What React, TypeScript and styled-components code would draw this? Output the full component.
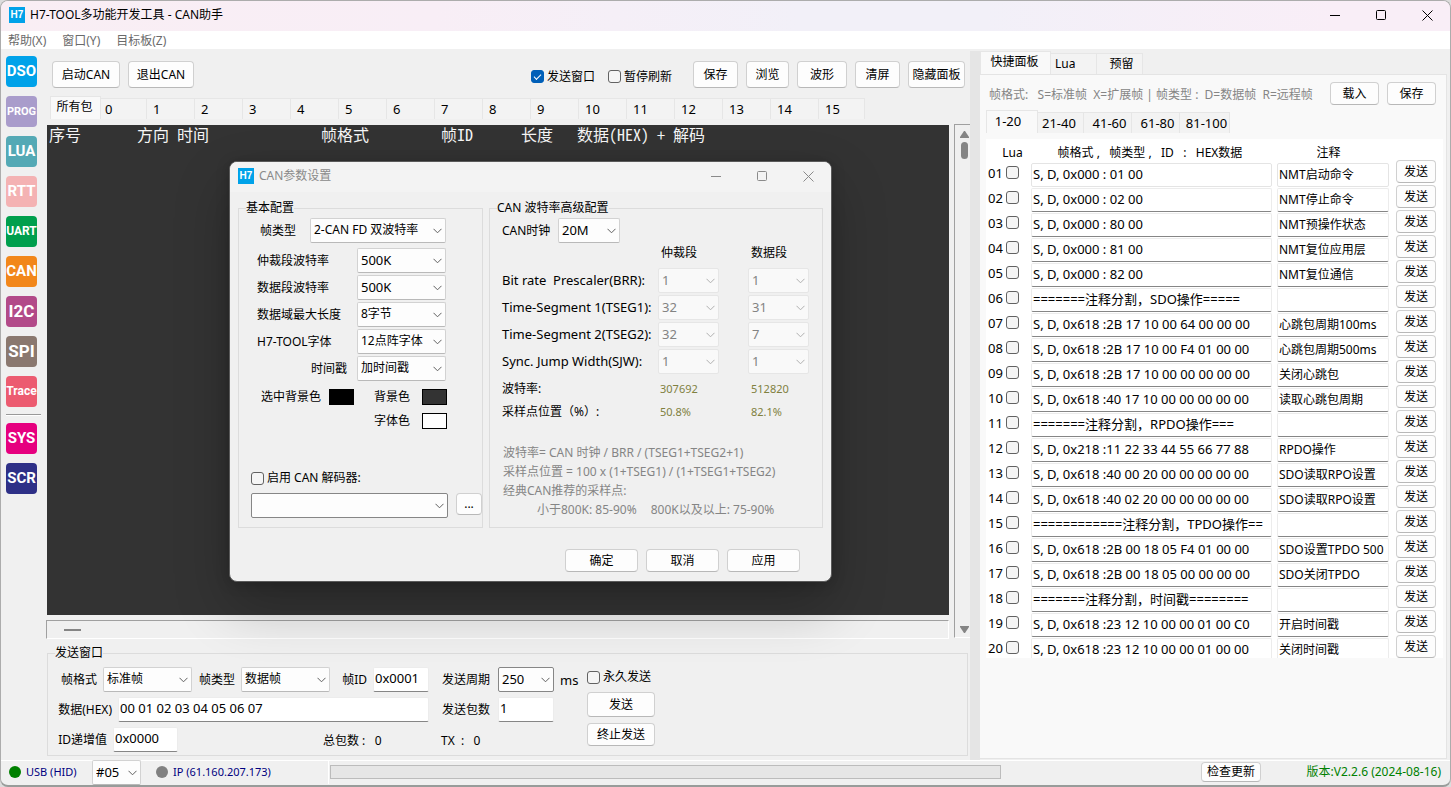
import React from 'react';
import styled, { createGlobalStyle, css } from 'styled-components';

const GlobalStyle = createGlobalStyle`
  *, *::before, *::after { box-sizing: border-box; }
  body {
    margin: 0;
    background: #dcdcdc;
    color: #000;
    font: 12px/16px "Noto Sans", "Noto Sans CJK SC", sans-serif;
  }
  button, input, select { font: inherit; color: inherit; margin: 0; }
  h1, h2, p { margin: 0; font: inherit; }
`;

/* ---------- window chrome ---------- */

const AppWindow = styled.div`
  position: relative;
  display: flex;
  flex-direction: column;
  min-height: 100vh;
  background: #f0f0f0;
  border: 1px solid #acacac;
  border-bottom: 2px solid #989c9a;
  border-radius: 8px;
  overflow: hidden;
`;

const TitleBar = styled.header`
  display: flex;
  align-items: center;
  gap: 5px;
  height: 30px;
  padding: 0 0 2px 8px;
  background: linear-gradient(90deg, #f9eef4 0%, #f8eef6 30%, #f2f0f8 55%, #f2f0f8 68%, #f9eef7 92%);
`;

const DialogTitleBar = styled(TitleBar)`
  background: #f3f3f3;
  color: #8a8a8a;
`;

const Logo = styled.span`
  display: grid;
  place-items: center;
  width: 16px;
  height: 16px;
  background: #00a2e9;
  color: #fff;
  font: bold 10px/16px "Liberation Sans", sans-serif;
`;

const WindowButtons = styled.div`
  display: flex;
  margin-left: auto;
`;

const WindowButton = styled.button`
  display: grid;
  place-items: center;
  width: 46px;
  height: 28px;
  padding: 0;
  border: 0;
  background: none;
  color: inherit;
`;

const MenuBar = styled.nav`
  display: flex;
  gap: 16px;
  height: 18px;
  padding-left: 7px;
  background: #fff;
`;

const MenuItem = styled.a`
  color: #6a6a6a;
  text-decoration: none;
  line-height: 19px;
`;

const Body = styled.div`
  display: flex;
  flex: 1;
`;

/* ---------- shared controls ---------- */

const Button = styled.button<{ $w?: number; $h?: number }>`
  width: ${p => (p.$w ? `${p.$w}px` : 'auto')};
  height: ${p => p.$h ?? 23}px;
  padding: 0;
  border: 1px solid #d0d0d0;
  border-bottom-color: #b8b8b8;
  border-radius: 4px;
  background: #fdfdfd;
  line-height: 16px;
  white-space: nowrap;
`;

const Check = styled.input.attrs({ type: 'checkbox' })`
  appearance: none;
  flex: none;
  display: inline-grid;
  place-items: center;
  width: 13px;
  height: 13px;
  border: 1px solid #626262;
  border-radius: 3px;
  background: #f5f5f5;

  &:checked { background: #005fb8; border-color: #005fb8; }
  &:checked::after {
    content: "";
    width: 7px;
    height: 4px;
    margin-top: -2px;
    border: solid #fff;
    border-width: 0 0 1px 1px;
    transform: rotate(-45deg);
  }
`;

const CheckLabel = styled.label`
  display: flex;
  align-items: center;
  gap: 3px;
  white-space: nowrap;
`;

const TextInput = styled.input<{ $w?: number }>`
  width: ${p => (p.$w ? `${p.$w}px` : '100%')};
  height: 25px;
  padding: 0 1px 3px;
  border: 1px solid #ececec;
  border-bottom-color: #868686;
  border-radius: 2px;
  background: #fff;
  font-size: 13px;
`;

const SelectBox = styled.span<{ $w: number; $strong?: boolean }>`
  position: relative;
  display: block;
  flex: none;
  width: ${p => p.$w}px;
  height: 25px;

  select {
    appearance: none;
    width: 100%;
    height: 100%;
    padding: 0 18px 1px 3px;
    border: 1px solid ${p => (p.$strong ? '#868686' : '#d2d2d2')};
    border-bottom-color: ${p => (p.$strong ? '#868686' : '#b9b9b9')};
    border-radius: 2px;
    background: #fdfdfd;
    opacity: 1;
  }
  select:disabled {
    border-color: #e6e6e6;
    background: #f9f9f9;
    color: #838383;
  }
  svg {
    position: absolute;
    right: 4px;
    top: 10px;
    pointer-events: none;
    color: #606060;
  }
  select:disabled + svg { color: #b0b0b0; }
`;

const ChevronIcon = () => (
  <svg width="9" height="6" viewBox="0 0 9 6" fill="none" stroke="currentColor" aria-hidden="true">
    <path d="M0.5 0.8 L4.5 4.8 L8.5 0.8" />
  </svg>
);

type DropDownProps = {
  value: string;
  width: number;
  id?: string;
  label?: string;
  disabled?: boolean;
  strong?: boolean;
  latin?: boolean;
};

const LatinSelect = styled.select<{ $latin?: boolean }>`
  && { font-size: ${p => (p.$latin ? 13 : 12)}px; }
`;

const DropDown = ({ value, width, id, label, disabled, strong, latin }: DropDownProps) => (
  <SelectBox $w={width} $strong={strong}>
    <LatinSelect id={id} aria-label={label} disabled={disabled} $latin={latin} defaultValue={value}>
      <option>{value}</option>
    </LatinSelect>
    <ChevronIcon />
  </SelectBox>
);

const Group = styled.fieldset<{ $inset: number }>`
  min-width: 0;
  margin: 0;
  padding: 0 0 0 ${p => p.$inset}px;
  border: 1px solid #dcdcdc;

  legend {
    margin-left: ${p => 7 - p.$inset}px;
    padding: 0;
    height: 16px;
  }
`;

/* ---------- left tool strip ---------- */

const ToolStrip = styled.nav`
  display: flex;
  flex-direction: column;
  flex: none;
  gap: 9px;
  width: 45px;
  padding: 7px 0 0 5px;
`;

const ToolButton = styled.button<{ $color: string; $size: number }>`
  display: flex;
  align-items: center;
  justify-content: center;
  width: 31px;
  height: 31px;
  padding: 0;
  border: 0;
  border-radius: 4px;
  background: ${p => p.$color};
  color: #fff;
  font: bold ${p => p.$size}px/31px Roboto, "Liberation Sans", sans-serif;
`;

const ToolSeparator = styled.hr`
  width: 35px;
  height: 2px;
  margin: -2px 0;
  border: 0;
  border-top: 1px solid #999;
  border-bottom: 1px solid #fff;
`;

const tools = [
  { name: 'DSO', color: '#00a2e9', size: 15 },
  { name: 'PROG', color: '#a99ccb', size: 11 },
  { name: 'LUA', color: '#54a9b5', size: 15 },
  { name: 'RTT', color: '#f4b2b3', size: 15 },
  { name: 'UART', color: '#009f4d', size: 12 },
  { name: 'CAN', color: '#f2871a', size: 15 },
  { name: 'I2C', color: '#b24a89', size: 17 },
  { name: 'SPI', color: '#8a786f', size: 17 },
  { name: 'Trace', color: '#ec5b70', size: 12 },
];
const systemTools = [
  { name: 'SYS', color: '#e6007f', size: 15 },
  { name: 'SCR', color: '#2e3087', size: 15 },
];

/* ---------- centre column ---------- */

const Center = styled.main`
  display: flex;
  flex-direction: column;
  flex: 1;
  min-width: 0;
`;

const Toolbar = styled.div`
  display: flex;
  align-items: center;
  gap: 8px;
  padding: 12px 5px 8px 6px;
`;

const ToolbarChecks = styled.div`
  display: flex;
  gap: 13px;
  margin: 4px 13px 0 auto;
`;

const TabStrip = styled.div`
  display: flex;
  align-items: flex-end;
  padding-left: 4px;
`;

const Tab = styled.button<{ $active?: boolean; $w: number; $center?: boolean; $latin?: boolean }>`
  width: ${p => p.$w}px;
  height: ${p => (p.$active ? 23 : 21)}px;
  padding: ${p => (p.$active ? '0 2px 3px 0' : '0 0 1px 4px')};
  border: 1px solid #e6e6e6;
  border-width: 1px 1px 0 0;
  background: ${p => (p.$active ? '#f9f9f9' : '#f3f3f3')};
  text-align: ${p => (p.$active || p.$center ? 'center' : 'left')};
  line-height: 16px;
  white-space: nowrap;
  ${p => p.$latin && css`font-size: 13px;`}
  ${p => p.$latin && p.$active && css`padding-right: 8px;`}
  &:first-child { border-left-width: 1px; }
`;

const PacketTab = styled(Tab)`
  &:nth-child(n + 3) { padding-left: 6px; }
`;

const ConsoleArea = styled.div`
  display: grid;
  grid-template-columns: 1fr 16px;
  grid-template-rows: 1fr 19px;
  column-gap: 5px;
  row-gap: 5px;
  flex: 1;
  margin-top: 6px;
`;

const Console = styled.div`
  margin-left: 1px;
  padding: 0 0 0 2px;
  min-height: 440px;
  background: #333;
  color: #f5f5f5;
  font: 16px/18px "Noto Sans Mono CJK SC", "Noto Sans CJK SC", monospace;
`;

const ConsoleHead = styled.div`
  display: grid;
  grid-template-columns: 88px 40px 144px 120px 80px 56px 1fr;
  white-space: nowrap;
`;

const VScroll = styled.div`
  grid-row: 1 / 3;
  grid-column: 2;
  display: flex;
  flex-direction: column;
  align-items: center;
  margin: -1px 0 1px;
  padding: 6px 0 4px 3px;
  border-left: 1px solid #a0a0a0;
  border-top: 1px solid #a0a0a0;
  border-bottom: 1px solid #fff;
  color: #858585;

  svg:last-child { margin-top: auto; }
`;

const VThumb = styled.div`
  width: 7px;
  height: 17px;
  margin-top: 4px;
  border-radius: 4px;
  background: #858585;
`;

const HScroll = styled.div`
  display: flex;
  align-items: center;
  padding-left: 17px;
  border: 1px solid #fff;
  border-top-color: #a0a0a0;
  border-left-color: #a0a0a0;
`;

const HThumb = styled.div`
  width: 17px;
  height: 2px;
  background: #858585;
`;

/* ---------- send panel ---------- */

const SendGroup = styled(Group)`
  margin: 6px 2px 4px 1px;
  padding-top: 6px;
  padding-bottom: 3px;
`;

const SendColumn = styled.div<{ $w: number }>`
  display: flex;
  flex-direction: column;
  gap: 5px;
  width: ${p => p.$w}px;
`;

const SendColumns = styled.div`
  display: flex;
`;

const Line = styled.div`
  display: flex;
  align-items: center;
  height: 25px;
  white-space: nowrap;
`;

const ForeverCheck = styled(CheckLabel)`
  height: 20px;
`;

const FieldLabel = styled.label<{ $w: number; $gap?: number }>`
  flex: none;
  width: ${p => p.$w}px;
  padding-right: ${p => p.$gap ?? 6}px;
  text-align: right;
`;

const Unit = styled.span`
  margin-left: 6px;
  font-size: 13px;
`;

const Counter = styled.span<{ $indent: number }>`
  margin-left: ${p => p.$indent}px;
  padding-top: 3px;
  white-space: pre;
`;

/* ---------- shortcut panel ---------- */

const Splitter = styled.div`
  flex: none;
  width: 10px;
  margin-top: 2px;
  background: #e5e5e5;
`;

const SidePanel = styled.aside`
  display: flex;
  flex-direction: column;
  flex: none;
  width: 470px;
  padding: 2px 3px 1px 0;
`;

const SideTabs = styled(TabStrip)`
  padding-left: 0;
`;

const SidePage = styled.div`
  flex: 1;
  padding: 7px 3px 0 6px;
  border: 1px solid #e4e4e4;
  border-left: 0;
  background: #f9f9f9;
`;

const HintRow = styled.div`
  display: flex;
  align-items: center;
  gap: 8px;
  height: 23px;
  padding: 0 7px 0 3px;
`;

const Hint = styled.p`
  flex: 1;
  padding-top: 3px;
  color: #858585;
  white-space: pre;
`;

const PageTabs = styled(TabStrip)`
  margin-top: 5px;
  padding-left: 0;
`;

const Sheet = styled.div`
  margin-top: 6px;
  background: #fff;
  overflow: hidden;
`;

const FrameTable = styled.table`
  width: 100%;
  margin-bottom: -4px;
  border-collapse: collapse;
  table-layout: fixed;

  th {
    height: 23px;
    padding: 4px 8px 0 0;
    font-weight: normal;
    white-space: pre;
  }
  th:first-child { padding: 4px 0 0 8px; }
  th:nth-child(3) { padding-right: 16px; }
  td {
    height: 25px;
    padding: 0;
    vertical-align: top;
  }
`;

const IndexCol = styled.col`width: 45px;`;
const NoteCol = styled.col`width: 119px;`;
const ActionCol = styled.col`width: 47px;`;

const RowIndex = styled.label`
  display: flex;
  align-items: center;
  gap: 3px;
  height: 22px;
  padding-left: 2px;
  font-size: 13px;

  input { margin-top: -1px; }
`;

const CellInput = styled(TextInput)<{ $plain?: boolean; $cell: 'data' | 'note' }>`
  display: block;
  width: calc(100% - ${p => (p.$cell === 'data' ? 5 : 7)}px);
  height: 24px;
  margin-top: 1px;
  font-size: ${p => (p.$cell === 'data' ? 13 : 12)}px;
  ${p => p.$plain && css`border-color: #e4e4e4;`}
`;

const RowButton = styled(Button)`
  display: block;
  margin-top: -2px;
`;

const frames: [string, string][] = [
  ['S, D, 0x000 : 01 00', 'NMT启动命令'],
  ['S, D, 0x000 : 02 00', 'NMT停止命令'],
  ['S, D, 0x000 : 80 00', 'NMT预操作状态'],
  ['S, D, 0x000 : 81 00', 'NMT复位应用层'],
  ['S, D, 0x000 : 82 00', 'NMT复位通信'],
  ['=======注释分割，SDO操作=====', ''],
  ['S, D, 0x618 :2B 17 10 00 64 00 00 00', '心跳包周期100ms'],
  ['S, D, 0x618 :2B 17 10 00 F4 01 00 00', '心跳包周期500ms'],
  ['S, D, 0x618 :2B 17 10 00 00 00 00 00', '关闭心跳包'],
  ['S, D, 0x618 :40 17 10 00 00 00 00 00', '读取心跳包周期'],
  ['=======注释分割，RPDO操作===', ''],
  ['S, D, 0x218 :11 22 33 44 55 66 77 88', 'RPDO操作'],
  ['S, D, 0x618 :40 00 20 00 00 00 00 00', 'SDO读取RPO设置'],
  ['S, D, 0x618 :40 02 20 00 00 00 00 00', 'SDO读取RPO设置'],
  ['============注释分割，TPDO操作==', ''],
  ['S, D, 0x618 :2B 00 18 05 F4 01 00 00', 'SDO设置TPDO 500'],
  ['S, D, 0x618 :2B 00 18 05 00 00 00 00', 'SDO关闭TPDO'],
  ['=======注释分割，时间戳========', ''],
  ['S, D, 0x618 :23 12 10 00 00 01 00 C0', '开启时间戳'],
  ['S, D, 0x618 :23 12 10 00 00 01 00 00', '关闭时间戳'],
];

/* ---------- status bar ---------- */

const StatusBar = styled.footer`
  display: flex;
  align-items: center;
  height: 25px;
  padding-bottom: 2px;
  border-top: 1px solid #fff;
`;

const Connections = styled.div`
  display: flex;
  align-items: center;
  width: 328px;
  height: 24px;
  padding-left: 8px;
  border-right: 1px solid #fff;
  color: #00007f;
  font-size: 11px;
`;

const Dot = styled.span<{ $color: string }>`
  width: 12px;
  height: 12px;
  margin-right: 5px;
  border-radius: 50%;
  background: ${p => p.$color};
`;

const ConnName = styled.span<{ $w?: number }>`
  width: ${p => (p.$w ? `${p.$w}px` : 'auto')};
`;

const PortSelect = styled.div`
  margin-right: 15px;
  color: #000;
`;

const Trough = styled.div`
  flex: 1;
  height: 14px;
  margin: 0 200px 0 1px;
  border: 1px solid #bcbcbc;
  background: #e6e6e6;
`;

const Version = styled.span`
  width: 189px;
  padding-right: 9px;
  text-align: right;
  color: #008000;
`;

/* ---------- CAN parameter dialog ---------- */

const Dialog = styled.section`
  position: absolute;
  left: 228px;
  top: 160px;
  width: 603px;
  border: 1px solid #5a5a5a;
  border-radius: 8px;
  background: #f0f0f0;
  overflow: hidden;
  box-shadow: 0 24px 56px rgba(0, 0, 0, 0.24), 0 2px 14px rgba(0, 0, 0, 0.2);
`;

const DialogBody = styled.div`
  display: grid;
  grid-template-columns: 245px 334px;
  gap: 6px;
  padding: 8px 0 0 8px;
`;

const DialogActions = styled.div`
  display: flex;
  justify-content: flex-end;
  gap: 8px;
  padding: 21px 31px 9px 0;
`;

const Basics = styled(Group)`
  padding-top: 2px;
  padding-bottom: 9px;
`;

const Advanced = styled(Group)`
  padding-top: 2px;
`;

const Settings = styled.div`
  display: flex;
  flex-direction: column;
  gap: 2px;
  padding: 0 36px 0 7px;
`;

const Setting = styled.div<{ $first?: boolean; $end?: boolean }>`
  display: flex;
  align-items: center;
  justify-content: ${p => (p.$end ? 'flex-end' : 'space-between')};
  gap: 10px;
  margin-bottom: ${p => (p.$first ? 3 : 0)}px;
  white-space: nowrap;
`;

const Swatches = styled.div`
  display: grid;
  grid-template-columns: 68px 45px 48px 24px;
  gap: 8px 0;
  padding-left: 11px;
  margin-top: 8px;
`;

const SwatchName = styled.span<{ $col: number }>`
  grid-column: ${p => p.$col};
`;

const Swatch = styled.button<{ $color: string }>`
  width: 25px;
  height: 16px;
  padding: 0;
  border: 1px solid #000;
  background: ${p => p.$color};
`;

const DecoderCheck = styled(CheckLabel)`
  height: 16px;
  margin: 41px 0 7px 1px;
`;

const DecoderRow = styled.div`
  display: flex;
  gap: 8px;
  padding-left: 1px;
`;

const ClockRow = styled.div`
  display: flex;
  align-items: center;
`;

const ClockLabel = styled.label`
  width: 56px;
`;

const Timing = styled.table`
  border-collapse: collapse;
  margin-top: 2px;

  th { padding: 0; font-weight: normal; text-align: left; white-space: pre; }
  tbody th { width: 156px; padding-bottom: 4px; font-size: 13px; }
  thead th { height: 16px; padding: 0 0 7px 3px; }
  td { width: 90px; padding: 0 0 2px; }
  td:last-child { width: 61px; }
`;

const Results = styled.dl`
  display: grid;
  grid-template-columns: 158px 91px 1fr;
  gap: 7px 0;
  margin: 5px 0 0;

  dd { margin: 0; color: #808040; font-size: 11px; }
  dt { white-space: pre; }
`;

const Notes = styled.div`
  margin: 23px 0 0 1px;
  color: #858585;
  line-height: 19px;
  white-space: pre;
`;

const NoteIndent = styled.p`
  && { padding-left: 34px; }
  display: flex;
  gap: 14px;
`;

const MinimizeIcon = () => (
  <svg width="11" height="11" viewBox="0 0 11 11" stroke="currentColor" aria-hidden="true"><path d="M0 5.5H10" /></svg>
);
const MaximizeIcon = () => (
  <svg width="11" height="11" viewBox="0 0 11 11" fill="none" stroke="currentColor" aria-hidden="true"><rect x="0.5" y="0.5" width="9" height="9" rx="1" /></svg>
);
const CloseIcon = () => (
  <svg width="11" height="11" viewBox="0 0 11 11" fill="none" stroke="currentColor" aria-hidden="true"><path d="M0.5 0.5L10.5 10.5M10.5 0.5L0.5 10.5" /></svg>
);

const WindowControls = () => (
  <WindowButtons>
    <WindowButton aria-label="最小化"><MinimizeIcon /></WindowButton>
    <WindowButton aria-label="最大化"><MaximizeIcon /></WindowButton>
    <WindowButton aria-label="关闭"><CloseIcon /></WindowButton>
  </WindowButtons>
);

const basicSettings = [
  { id: 'arb', label: '仲裁段波特率', value: '500K', latin: true },
  { id: 'dat', label: '数据段波特率', value: '500K', latin: true },
  { id: 'len', label: '数据域最大长度', value: '8字节' },
  { id: 'fnt', label: 'H7-TOOL字体', value: '12点阵字体' },
];

const timings = [
  { label: 'Bit rate  Prescaler(BRR):', a: '1', b: '1' },
  { label: 'Time-Segment 1(TSEG1):', a: '32', b: '31' },
  { label: 'Time-Segment 2(TSEG2):', a: '32', b: '7' },
  { label: 'Sync. Jump Width(SJW):', a: '1', b: '1' },
];

const CanDialog = () => (
  <Dialog role="dialog" aria-labelledby="dialog-title">
    <DialogTitleBar as="div">
      <Logo>H7</Logo>
      <h2 id="dialog-title">CAN参数设置</h2>
      <WindowControls />
    </DialogTitleBar>
    <DialogBody>
      <Basics $inset={11}>
        <legend>基本配置</legend>
        <Settings>
          <Setting $first>
            <label htmlFor="ftype">&nbsp;帧类型</label>
            <DropDown id="ftype" value="2-CAN FD 双波特率" width={136} />
          </Setting>
          {basicSettings.map(s => (
            <Setting key={s.id}>
              <label htmlFor={s.id}>{s.label}</label>
              <DropDown id={s.id} value={s.value} width={89} latin={s.latin} />
            </Setting>
          ))}
          <Setting $end>
            <label htmlFor="stamp">时间戳</label>
            <DropDown id="stamp" value="加时间戳" width={89} />
          </Setting>
        </Settings>
        <Swatches>
          <SwatchName $col={1}>选中背景色</SwatchName>
          <Swatch $color="#000" aria-label="选中背景色" />
          <SwatchName $col={3}>背景色</SwatchName>
          <Swatch $color="#333" aria-label="背景色" />
          <SwatchName $col={3}>字体色</SwatchName>
          <Swatch $color="#fff" aria-label="字体色" />
        </Swatches>
        <DecoderCheck>
          <Check />
          启用 CAN 解码器:
        </DecoderCheck>
        <DecoderRow>
          <DropDown label="解码器" value="" width={197} strong />
          <Button $w={26} $h={22}>...</Button>
        </DecoderRow>
      </Basics>
      <Advanced $inset={12}>
        <legend>CAN 波特率高级配置</legend>
        <ClockRow>
          <ClockLabel htmlFor="clock">CAN时钟</ClockLabel>
          <DropDown id="clock" value="20M" width={62} latin />
        </ClockRow>
        <Timing>
          <thead>
            <tr><th /><th>仲裁段</th><th>数据段</th></tr>
          </thead>
          <tbody>
            {timings.map(t => (
              <tr key={t.label}>
                <th scope="row">{t.label}</th>
                <td><DropDown label={`${t.label} 仲裁段`} value={t.a} width={61} disabled latin /></td>
                <td><DropDown label={`${t.label} 数据段`} value={t.b} width={61} disabled latin /></td>
              </tr>
            ))}
          </tbody>
        </Timing>
        <Results>
          <dt>波特率:</dt><dd>307692</dd><dd>512820</dd>
          <dt>采样点位置（%）:</dt><dd>50.8%</dd><dd>82.1%</dd>
        </Results>
        <Notes>
          <p>波特率= CAN 时钟 / BRR / (TSEG1+TSEG2+1)</p>
          <p>采样点位置 = 100 x (1+TSEG1) / (1+TSEG1+TSEG2)</p>
          <p>经典CAN推荐的采样点:</p>
          <NoteIndent><span>小于800K: 85-90%</span><span>800K以及以上: 75-90%</span></NoteIndent>
        </Notes>
      </Advanced>
    </DialogBody>
    <DialogActions>
      <Button $w={73}>确定</Button>
      <Button $w={73}>取消</Button>
      <Button $w={73}>应用</Button>
    </DialogActions>
  </Dialog>
);

const SendPanel = () => (
  <SendGroup $inset={10}>
    <legend>发送窗口</legend>
    <SendColumns>
      <SendColumn $w={371}>
        <Line>
          <FieldLabel $w={45} htmlFor="fmt">帧格式</FieldLabel>
          <DropDown id="fmt" value="标准帧" width={89} />
          <FieldLabel $w={49} htmlFor="kind">帧类型</FieldLabel>
          <DropDown id="kind" value="数据帧" width={89} />
          <FieldLabel $w={43} htmlFor="fid">帧ID</FieldLabel>
          <TextInput id="fid" $w={56} defaultValue="0x0001" />
        </Line>
        <Line>
          <FieldLabel $w={60} htmlFor="hex">数据(HEX)</FieldLabel>
          <TextInput id="hex" defaultValue="00 01 02 03 04 05 06 07" />
        </Line>
        <Line>
          <FieldLabel $w={55} htmlFor="inc">ID递增值</FieldLabel>
          <TextInput id="inc" $w={65} defaultValue="0x0000" />
          <Counter $indent={145}>总包数 :   0</Counter>
        </Line>
      </SendColumn>
      <SendColumn $w={158}>
        <Line>
          <FieldLabel $w={69} $gap={8} htmlFor="period">发送周期</FieldLabel>
          <DropDown id="period" value="250" width={56} strong latin />
          <Unit>ms</Unit>
        </Line>
        <Line>
          <FieldLabel $w={69} $gap={8} htmlFor="count">发送包数</FieldLabel>
          <TextInput id="count" $w={56} defaultValue="1" />
        </Line>
        <Line><Counter $indent={12}>TX  :   0</Counter></Line>
      </SendColumn>
      <SendColumn $w={68}>
        <ForeverCheck><Check />永久发送</ForeverCheck>
        <Line><Button $w={68} $h={25}>发送</Button></Line>
        <Line><Button $w={68}>终止发送</Button></Line>
      </SendColumn>
    </SendColumns>
  </SendGroup>
);

const ShortcutPanel = () => (
  <SidePanel>
    <SideTabs role="tablist">
      <Tab role="tab" $w={71} $active>快捷面板</Tab>
      <Tab role="tab" $w={46}>Lua</Tab>
      <Tab role="tab" $w={46} $center>预留</Tab>
    </SideTabs>
    <SidePage>
      <HintRow>
        <Hint>帧格式:   S=标准帧  X=扩展帧 | 帧类型 :  D=数据帧  R=远程帧</Hint>
        <Button $w={49}>载入</Button>
        <Button $w={49}>保存</Button>
      </HintRow>
      <PageTabs role="tablist">
        <Tab role="tab" $w={52} $active $latin>1-20</Tab>
        <Tab role="tab" $w={46} $latin>21-40</Tab>
        <Tab role="tab" $w={48} $center $latin>41-60</Tab>
        <Tab role="tab" $w={48} $center $latin>61-80</Tab>
        <Tab role="tab" $w={50} $center $latin>81-100</Tab>
      </PageTabs>
      <Sheet>
        <FrameTable>
          <colgroup><IndexCol /><col /><NoteCol /><ActionCol /></colgroup>
          <thead>
            <tr><th>Lua</th><th>帧格式 ,   帧类型 ,   ID   :   HEX数据</th><th>注释</th><th /></tr>
          </thead>
          <tbody>
            {frames.map(([data, note], i) => {
              const no = String(i + 1).padStart(2, '0');
              return (
                <tr key={no}>
                  <td><RowIndex>{no}<Check /></RowIndex></td>
                  <td><CellInput $cell="data" $plain={i === 0} aria-label={`数据 ${no}`} defaultValue={data} /></td>
                  <td><CellInput $cell="note" $plain={i === 0} aria-label={`注释 ${no}`} defaultValue={note} /></td>
                  <td><RowButton $w={40}>发送</RowButton></td>
                </tr>
              );
            })}
          </tbody>
        </FrameTable>
      </Sheet>
    </SidePage>
  </SidePanel>
);

export default function App() {
  return (
    <>
      <GlobalStyle />
      <AppWindow>
        <TitleBar>
          <Logo>H7</Logo>
          <h1>H7-TOOL多功能开发工具 - CAN助手</h1>
          <WindowControls />
        </TitleBar>
        <MenuBar>
          <MenuItem href="#help">帮助(X)</MenuItem>
          <MenuItem href="#window">窗口(Y)</MenuItem>
          <MenuItem href="#target">目标板(Z)</MenuItem>
        </MenuBar>
        <Body>
          <ToolStrip>
            {tools.map(t => <ToolButton key={t.name} $color={t.color} $size={t.size}>{t.name}</ToolButton>)}
            <ToolSeparator />
            {systemTools.map(t => <ToolButton key={t.name} $color={t.color} $size={t.size}>{t.name}</ToolButton>)}
          </ToolStrip>
          <Center>
            <Toolbar>
              <Button $w={68} $h={27}>启动CAN</Button>
              <Button $w={66} $h={27}>退出CAN</Button>
              <ToolbarChecks>
                <CheckLabel><Check defaultChecked />发送窗口</CheckLabel>
                <CheckLabel><Check />暂停刷新</CheckLabel>
              </ToolbarChecks>
              <Button $w={45} $h={27}>保存</Button>
              <Button $w={43} $h={27}>浏览</Button>
              <Button $w={50} $h={27}>波形</Button>
              <Button $w={45} $h={27}>清屏</Button>
              <Button $w={57} $h={27}>隐藏面板</Button>
            </Toolbar>
            <TabStrip role="tablist">
              <PacketTab role="tab" $w={51} $active>所有包</PacketTab>
              {Array.from({ length: 16 }, (_, i) => (
                <PacketTab key={i} role="tab" $latin $w={i === 0 || i === 15 ? 46 : 48}>{i}</PacketTab>
              ))}
            </TabStrip>
            <ConsoleArea>
              <Console>
                <ConsoleHead>
                  <span>序号</span><span>方向</span><span>时间</span><span>帧格式</span>
                  <span>帧ID</span><span>长度</span><span>数据(HEX) + 解码</span>
                </ConsoleHead>
              </Console>
              <VScroll>
                <svg width="9" height="7" viewBox="0 0 9 7" fill="currentColor" aria-hidden="true"><path d="M4 0h1l4 6v1H0V6z" /></svg>
                <VThumb />
                <svg width="9" height="7" viewBox="0 0 9 7" fill="currentColor" aria-hidden="true"><path d="M0 0h9v1L5 7H4L0 1z" /></svg>
              </VScroll>
              <HScroll><HThumb /></HScroll>
            </ConsoleArea>
            <SendPanel />
          </Center>
          <Splitter />
          <ShortcutPanel />
        </Body>
        <StatusBar>
          <Connections>
            <Dot $color="#008000" />
            <ConnName $w={66}>USB (HID)</ConnName>
            <PortSelect><DropDown label="设备" value="#05" width={49} latin /></PortSelect>
            <Dot $color="#808080" />
            <ConnName>IP (61.160.207.173)</ConnName>
          </Connections>
          <Trough role="progressbar" aria-label="进度" />
          <Button $w={60} $h={20}>检查更新</Button>
          <Version>版本:V2.2.6 (2024-08-16)</Version>
        </StatusBar>
        <CanDialog />
      </AppWindow>
    </>
  );
}
